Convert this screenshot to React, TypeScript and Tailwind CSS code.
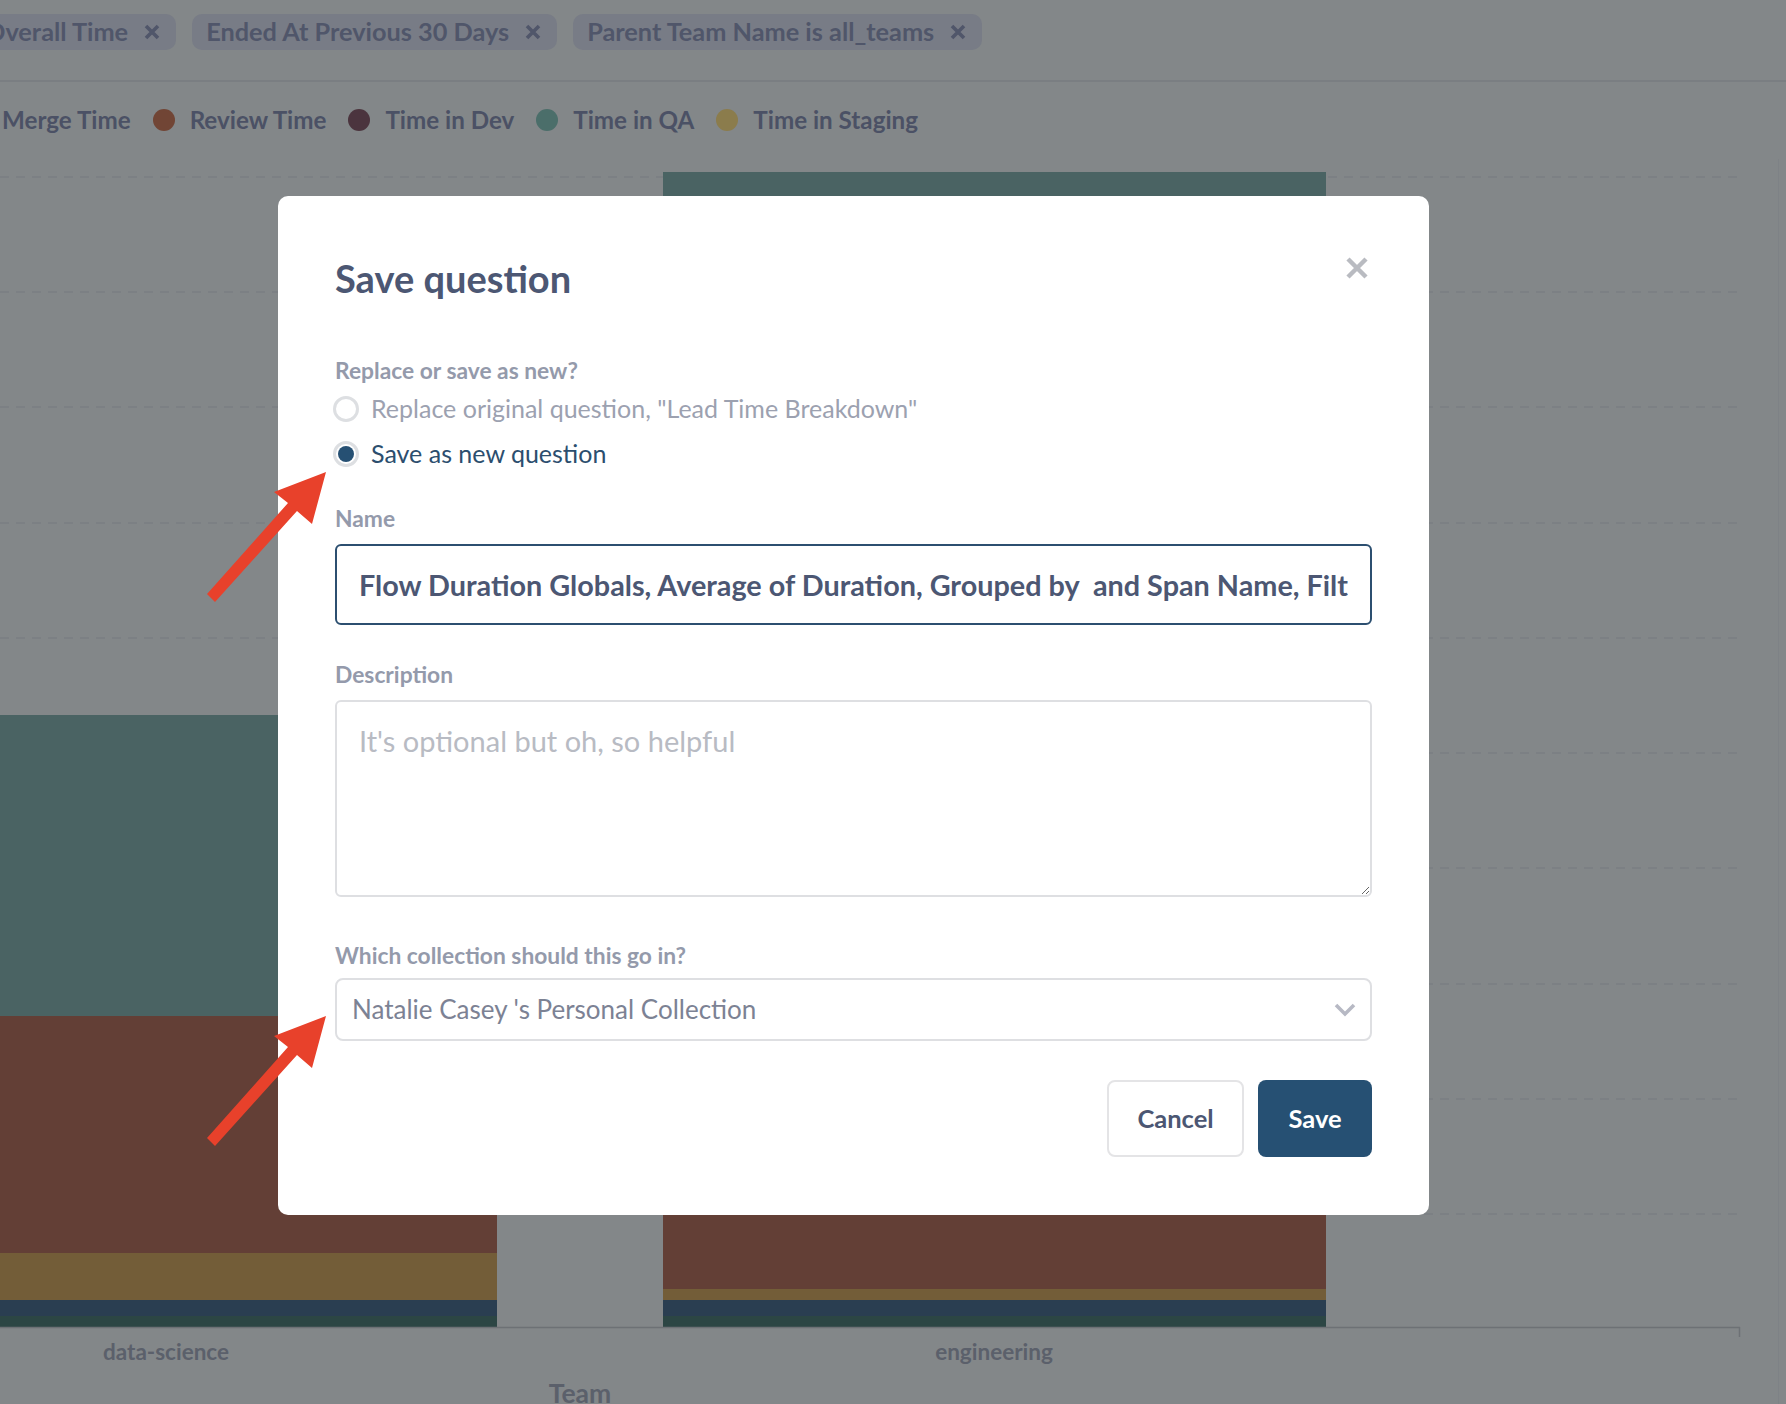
import React from "react";

const Chip = ({ label, className }: { label: string; className?: string }) => {
  return (
    <div
      className={
        "flex h-[36px] shrink-0 items-center rounded-[10px] bg-[#787c86] pl-[14px] pr-[16px] text-[25.3px] font-bold leading-none text-[#50566a] " +
        (className ?? "")
      }
    >
      <span>{label}</span>
      <svg className="ml-[16px]" width="16" height="16" viewBox="0 0 16 16">
        <path d="M2 2L14 14M14 2L2 14" stroke="#50566a" strokeWidth="3.6" />
      </svg>
    </div>
  );
};

const LegendItem = ({ color, label }: { color: string; label: string }) => {
  return (
    <div className="flex items-center">
      <span className="h-[22px] w-[22px] rounded-full" style={{ background: color }} />
      <span className="ml-[15px]">{label}</span>
    </div>
  );
};

const grid = [18, 133, 248, 364, 479, 594, 709, 825, 940, 1055];

const Chart = () => {
  return (
    <svg width="1786" height="1245" className="block">
      {grid.map((y) => (
        <line key={y} x1="0" x2="1737" y1={y} y2={y} stroke="#7b7f83" strokeWidth="1.5" strokeDasharray="9 7" />
      ))}
      {/* data-science */}
      <rect x="0" y="556" width="497" height="301" fill="#4a6363" />
      <rect x="0" y="857" width="497" height="237" fill="#633f36" />
      <rect x="0" y="1094" width="497" height="47" fill="#735d38" />
      <rect x="0" y="1141" width="497" height="16" fill="#2a3e51" />
      <rect x="0" y="1157" width="497" height="11" fill="#2c4644" />
      {/* engineering */}
      <rect x="663" y="13" width="663" height="690" fill="#4a6363" />
      <rect x="663" y="703" width="663" height="427" fill="#633f36" />
      <rect x="663" y="1130" width="663" height="11" fill="#735d38" />
      <rect x="663" y="1141" width="663" height="16" fill="#2a3e51" />
      <rect x="663" y="1157" width="663" height="11" fill="#2c4644" />
      <line x1="0" x2="1740" y1="1168.5" y2="1168.5" stroke="#6d7175" strokeWidth="1.5" />
      <line x1="1739.5" x2="1739.5" y1="1168" y2="1178" stroke="#6d7175" strokeWidth="1.5" />
      <line x1="1778.5" x2="1778.5" y1="0" y2="1245" stroke="#7e8286" strokeWidth="1" />
      <text x="166" y="1201" textAnchor="middle" fontFamily="Lato, sans-serif" fontWeight="700" fontSize="22.5" fill="#5b606b">
        data-science
      </text>
      <text x="994" y="1201" textAnchor="middle" fontFamily="Lato, sans-serif" fontWeight="700" fontSize="22.5" fill="#5b606b">
        engineering
      </text>
      <text x="580" y="1244" textAnchor="middle" fontFamily="Lato, sans-serif" fontWeight="700" fontSize="26.5" fill="#5b606b">
        Team
      </text>
    </svg>
  );
};

const Radio = ({ checked, label }: { checked?: boolean; label: string }) => {
  return (
    <div className="flex h-[40px] items-center">
      <span className="ml-[-2px] flex h-[26px] w-[26px] items-center justify-center rounded-full border-[3px] border-[#dddfe2]">
        {checked && <span className="h-[16px] w-[16px] rounded-full bg-[#265073]" />}
      </span>
      <span className={"ml-[12px] text-[25px] " + (checked ? "text-[#2c4e6e]" : "text-[#9ca1b0]")}>{label}</span>
    </div>
  );
};

const Label = ({ children, className }: { children: React.ReactNode; className?: string }) => (
  <div className={"h-[25px] text-[22.8px] font-bold leading-[25px] text-[#949aab] " + (className ?? "")}>{children}</div>
);

export default function App() {
  return (
    <div className="relative h-[1404px] w-[1786px] overflow-hidden bg-[#838789] font-['Lato',sans-serif]">
      <div className="flex h-[82px] items-start gap-[16px] border-b-2 border-[#7a7e82] pt-[14px]">
        <Chip label="Overall Time" className="ml-[-29px]" />
        <Chip label="Ended At Previous 30 Days" />
        <Chip label="Parent Team Name is all_teams" />
      </div>
      <div className="flex h-[77px] items-center gap-[22px] pl-[2px] text-[24.2px] font-bold text-[#4b5165]">
        <span>Merge Time</span>
        <LegendItem color="#714535" label="Review Time" />
        <LegendItem color="#4b343e" label="Time in Dev" />
        <LegendItem color="#4b6e6a" label="Time in QA" />
        <LegendItem color="#8b7c4c" label="Time in Staging" />
      </div>
      <Chart />

      {/* modal */}
      <div className="absolute left-[278px] top-[196px] flex h-[1019px] w-[1151px] flex-col rounded-[10px] bg-white px-[57px] pt-[60px]">
        <button className="absolute right-[61px] top-[61px]">
          <svg width="22" height="22" viewBox="0 0 22 22">
            <path d="M2 2L20 20M20 2L2 20" stroke="#b9bbc1" strokeWidth="4.5" />
          </svg>
        </button>
        <h2 className="h-[44px] text-[38px] font-bold leading-[44px] text-[#4c5773]">Save question</h2>

        <Label className="mt-[58px]">Replace or save as new?</Label>
        <div className="mt-[6px] flex flex-col gap-[5px]">
          <Radio label={'Replace original question, "Lead Time Breakdown"'} />
          <Radio checked label="Save as new question" />
        </div>

        <Label className="mt-[32px]">Name</Label>
        <input
          readOnly
          defaultValue="Flow Duration Globals, Average of Duration, Grouped by  and Span Name, Filtered by Ended At Previous 30 Days"
          className="mt-[13px] h-[81px] w-full rounded-[6px] border-2 border-[#2c4f70] px-[22px] text-[28.8px] font-bold text-[#4c5773] outline-none"
        />

        <Label className="mt-[37px]">Description</Label>
        <textarea
          placeholder="It's optional but oh, so helpful"
          className="mt-[13px] h-[197px] w-full resize-y rounded-[6px] border-2 border-[#dedfe2] px-[22px] pt-[20px] text-[29px] leading-[38px] text-[#4c5773] outline-none placeholder:text-[#b8bbc3]"
        />

        <Label className="mt-[46px]">Which collection should this go in?</Label>
        <div className="mt-[10px] flex h-[63px] items-center justify-between rounded-[8px] border-2 border-[#dedfe2] pl-[15px] pr-[14px]">
          <span className="text-[26px] text-[#7c8294]">Natalie Casey 's Personal Collection</span>
          <svg width="22" height="14" viewBox="0 0 22 14">
            <path d="M2 2L11 11L20 2" fill="none" stroke="#b7b9c4" strokeWidth="3.6" />
          </svg>
        </div>

        <div className="mt-[39px] flex justify-end gap-[14px]">
          <button className="h-[77px] w-[137px] rounded-[8px] border-2 border-[#e4e4e6] text-[25.5px] font-bold text-[#4c5773]">
            Cancel
          </button>
          <button className="h-[77px] w-[114px] rounded-[8px] bg-[#265073] text-[25.5px] font-bold text-white">Save</button>
        </div>
      </div>

      {/* annotation arrows */}
      <svg className="pointer-events-none absolute inset-0" width="1786" height="1404">
        <polygon points="326,472 312,524 297,511 215,602 207,594 288,503 274,492" fill="#e8412b" />
        <polygon points="326,1016 312,1068 297,1055 215,1146 207,1138 288,1047 274,1036" fill="#e8412b" />
      </svg>
    </div>
  );
}
